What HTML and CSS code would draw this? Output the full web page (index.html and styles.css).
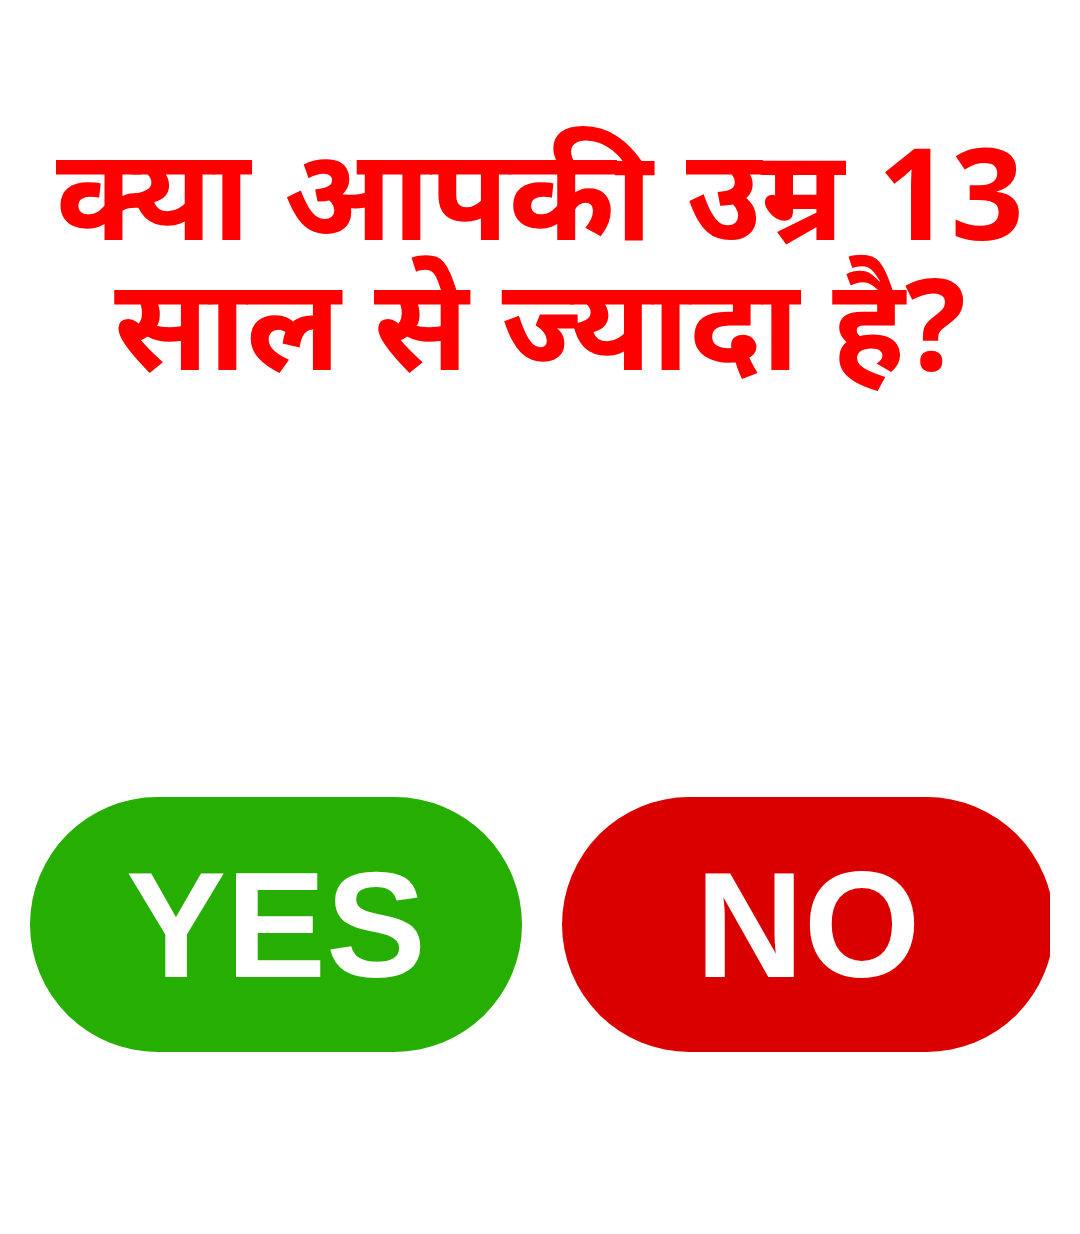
FILE: index.html
```html
<!DOCTYPE html>
<html lang="hi">
<head>
<meta charset="utf-8">
<link rel="stylesheet" href="styles.css">
</head>
<body>
<main class="page">
  <h1 class="question"><span class="line">क्या आपकी उम्र 13</span><span class="line">साल से ज्यादा है?</span></h1>
  <div class="choices">
    <button class="pill pill-yes">YES</button>
    <button class="pill pill-no">NO</button>
  </div>
</main>
</body>
</html>
```
FILE: styles.css
```css
html, body {
  margin: 0;
  padding: 0;
  background: #ffffff;
}
.page {
  width: 1080px;
  height: 1234px;
  overflow: hidden;
}
.question {
  margin: 0;
  padding-top: 126px;
  text-align: center;
  color: #ff0000;
  font-family: "Noto Sans", "Noto Sans Devanagari", sans-serif;
  font-weight: 700;
  font-size: 128px;
  line-height: 130px;
}
.line {
  display: block;
}
.choices {
  display: flex;
  gap: 40px;
  width: 1020px;
  padding-left: 30px;
  margin-top: 411px;
  overflow: hidden;
}
.pill {
  flex: 0 0 492px;
  height: 255px;
  border: none;
  border-radius: 128px;
  color: #ffffff;
  font-family: "Liberation Sans", Arial, sans-serif;
  font-weight: 700;
  font-size: 150px;
  line-height: 1;
  padding: 0;
  display: flex;
  align-items: center;
  justify-content: center;
}
.pill-yes { background: #27ae02; }
.pill-no { background: #db0000; }
```
